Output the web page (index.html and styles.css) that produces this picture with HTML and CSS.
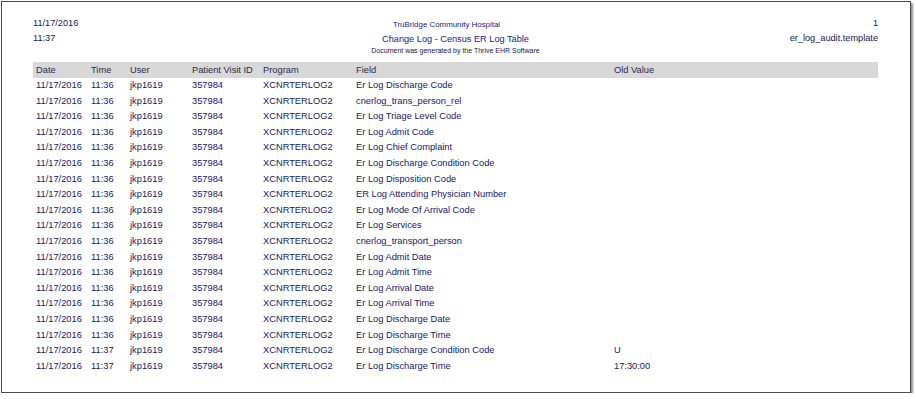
FILE: index.html
```html
<!DOCTYPE html>
<html>
<head>
<meta charset="utf-8">
<link rel="stylesheet" href="styles.css">
</head>
<body>
<div class="frame">
  <div class="report-head">
    <div class="left">
      <div class="l1">11/17/2016</div>
      <div class="l2">11:37</div>
    </div>
    <div class="center">
      <div class="hosp">TruBridge Community Hospital</div>
      <div class="title">Change Log - Census ER Log Table</div>
      <div class="gen">Document was generated by the Thrive EHR Software</div>
    </div>
    <div class="right">
      <div class="l1">1</div>
      <div class="l2">er_log_audit.template</div>
    </div>
  </div>
  <div class="table">
    <div class="row head">
      <span>Date</span><span>Time</span><span>User</span><span>Patient Visit ID</span><span>Program</span><span>Field</span><span>Old Value</span>
    </div>
    <div class="row"><span>11/17/2016</span><span>11:36</span><span>jkp1619</span><span>357984</span><span>XCNRTERLOG2</span><span>Er Log Discharge Code</span><span></span></div>
    <div class="row"><span>11/17/2016</span><span>11:36</span><span>jkp1619</span><span>357984</span><span>XCNRTERLOG2</span><span>cnerlog_trans_person_rel</span><span></span></div>
    <div class="row"><span>11/17/2016</span><span>11:36</span><span>jkp1619</span><span>357984</span><span>XCNRTERLOG2</span><span>Er Log Triage Level Code</span><span></span></div>
    <div class="row"><span>11/17/2016</span><span>11:36</span><span>jkp1619</span><span>357984</span><span>XCNRTERLOG2</span><span>Er Log Admit Code</span><span></span></div>
    <div class="row"><span>11/17/2016</span><span>11:36</span><span>jkp1619</span><span>357984</span><span>XCNRTERLOG2</span><span>Er Log Chief Complaint</span><span></span></div>
    <div class="row"><span>11/17/2016</span><span>11:36</span><span>jkp1619</span><span>357984</span><span>XCNRTERLOG2</span><span>Er Log Discharge Condition Code</span><span></span></div>
    <div class="row"><span>11/17/2016</span><span>11:36</span><span>jkp1619</span><span>357984</span><span>XCNRTERLOG2</span><span>Er Log Disposition Code</span><span></span></div>
    <div class="row"><span>11/17/2016</span><span>11:36</span><span>jkp1619</span><span>357984</span><span>XCNRTERLOG2</span><span>ER Log Attending Physician Number</span><span></span></div>
    <div class="row"><span>11/17/2016</span><span>11:36</span><span>jkp1619</span><span>357984</span><span>XCNRTERLOG2</span><span>Er Log Mode Of Arrival Code</span><span></span></div>
    <div class="row"><span>11/17/2016</span><span>11:36</span><span>jkp1619</span><span>357984</span><span>XCNRTERLOG2</span><span>Er Log Services</span><span></span></div>
    <div class="row"><span>11/17/2016</span><span>11:36</span><span>jkp1619</span><span>357984</span><span>XCNRTERLOG2</span><span>cnerlog_transport_person</span><span></span></div>
    <div class="row"><span>11/17/2016</span><span>11:36</span><span>jkp1619</span><span>357984</span><span>XCNRTERLOG2</span><span>Er Log Admit Date</span><span></span></div>
    <div class="row"><span>11/17/2016</span><span>11:36</span><span>jkp1619</span><span>357984</span><span>XCNRTERLOG2</span><span>Er Log Admit Time</span><span></span></div>
    <div class="row"><span>11/17/2016</span><span>11:36</span><span>jkp1619</span><span>357984</span><span>XCNRTERLOG2</span><span>Er Log Arrival Date</span><span></span></div>
    <div class="row"><span>11/17/2016</span><span>11:36</span><span>jkp1619</span><span>357984</span><span>XCNRTERLOG2</span><span>Er Log Arrival Time</span><span></span></div>
    <div class="row"><span>11/17/2016</span><span>11:36</span><span>jkp1619</span><span>357984</span><span>XCNRTERLOG2</span><span>Er Log Discharge Date</span><span></span></div>
    <div class="row"><span>11/17/2016</span><span>11:36</span><span>jkp1619</span><span>357984</span><span>XCNRTERLOG2</span><span>Er Log Discharge Time</span><span></span></div>
    <div class="row"><span>11/17/2016</span><span>11:37</span><span>jkp1619</span><span>357984</span><span>XCNRTERLOG2</span><span>Er Log Discharge Condition Code</span><span>U</span></div>
    <div class="row"><span>11/17/2016</span><span>11:37</span><span>jkp1619</span><span>357984</span><span>XCNRTERLOG2</span><span>Er Log Discharge Time</span><span>17:30:00</span></div>
  </div>
</div>
</body>
</html>
```
FILE: styles.css
```css
html, body {
  margin: 0;
  padding: 0;
  background: #ffffff;
}
body {
  padding: 1px 0 0 1px;
  font-family: "Liberation Sans", Arial, sans-serif;
  color: #171765;
}
.frame {
  box-sizing: border-box;
  width: 910px;
  height: 392px;
  border: 1px solid #4a4a4a;
  box-shadow: 2px 2px 2px #8f8f8f;
  padding: 14px 32px 0 31px;
}
.report-head {
  display: grid;
  grid-template-columns: 1fr auto 1fr;
  height: 46px;
}
.left, .right {
  font-size: 9.2px;
  color: #161650;
}
.right {
  text-align: right;
}
.l1 {
  line-height: 14px;
}
.l2 {
  line-height: 16px;
}
.center {
  text-align: center;
  color: #20208a;
}
.hosp {
  font-size: 7.9px;
  line-height: 12px;
  margin-top: 3px;
  padding-right: 18px;
}
.title {
  font-size: 9.2px;
  line-height: 13px;
  margin-top: 2px;
}
.gen {
  font-size: 7px;
  line-height: 10px;
  color: #161650;
}
.table {
  font-size: 9.3px;
}
.row {
  display: grid;
  grid-template-columns: 55px 39px 62px 71px 93px 258px 1fr;
  height: 15.6px;
  line-height: 15.6px;
  white-space: nowrap;
}
.row span {
  padding-left: 3px;
}
.row.head {
  background: #d8d8d8;
  height: 16px;
  line-height: 16px;
  color: #2a2a50;
}
```
